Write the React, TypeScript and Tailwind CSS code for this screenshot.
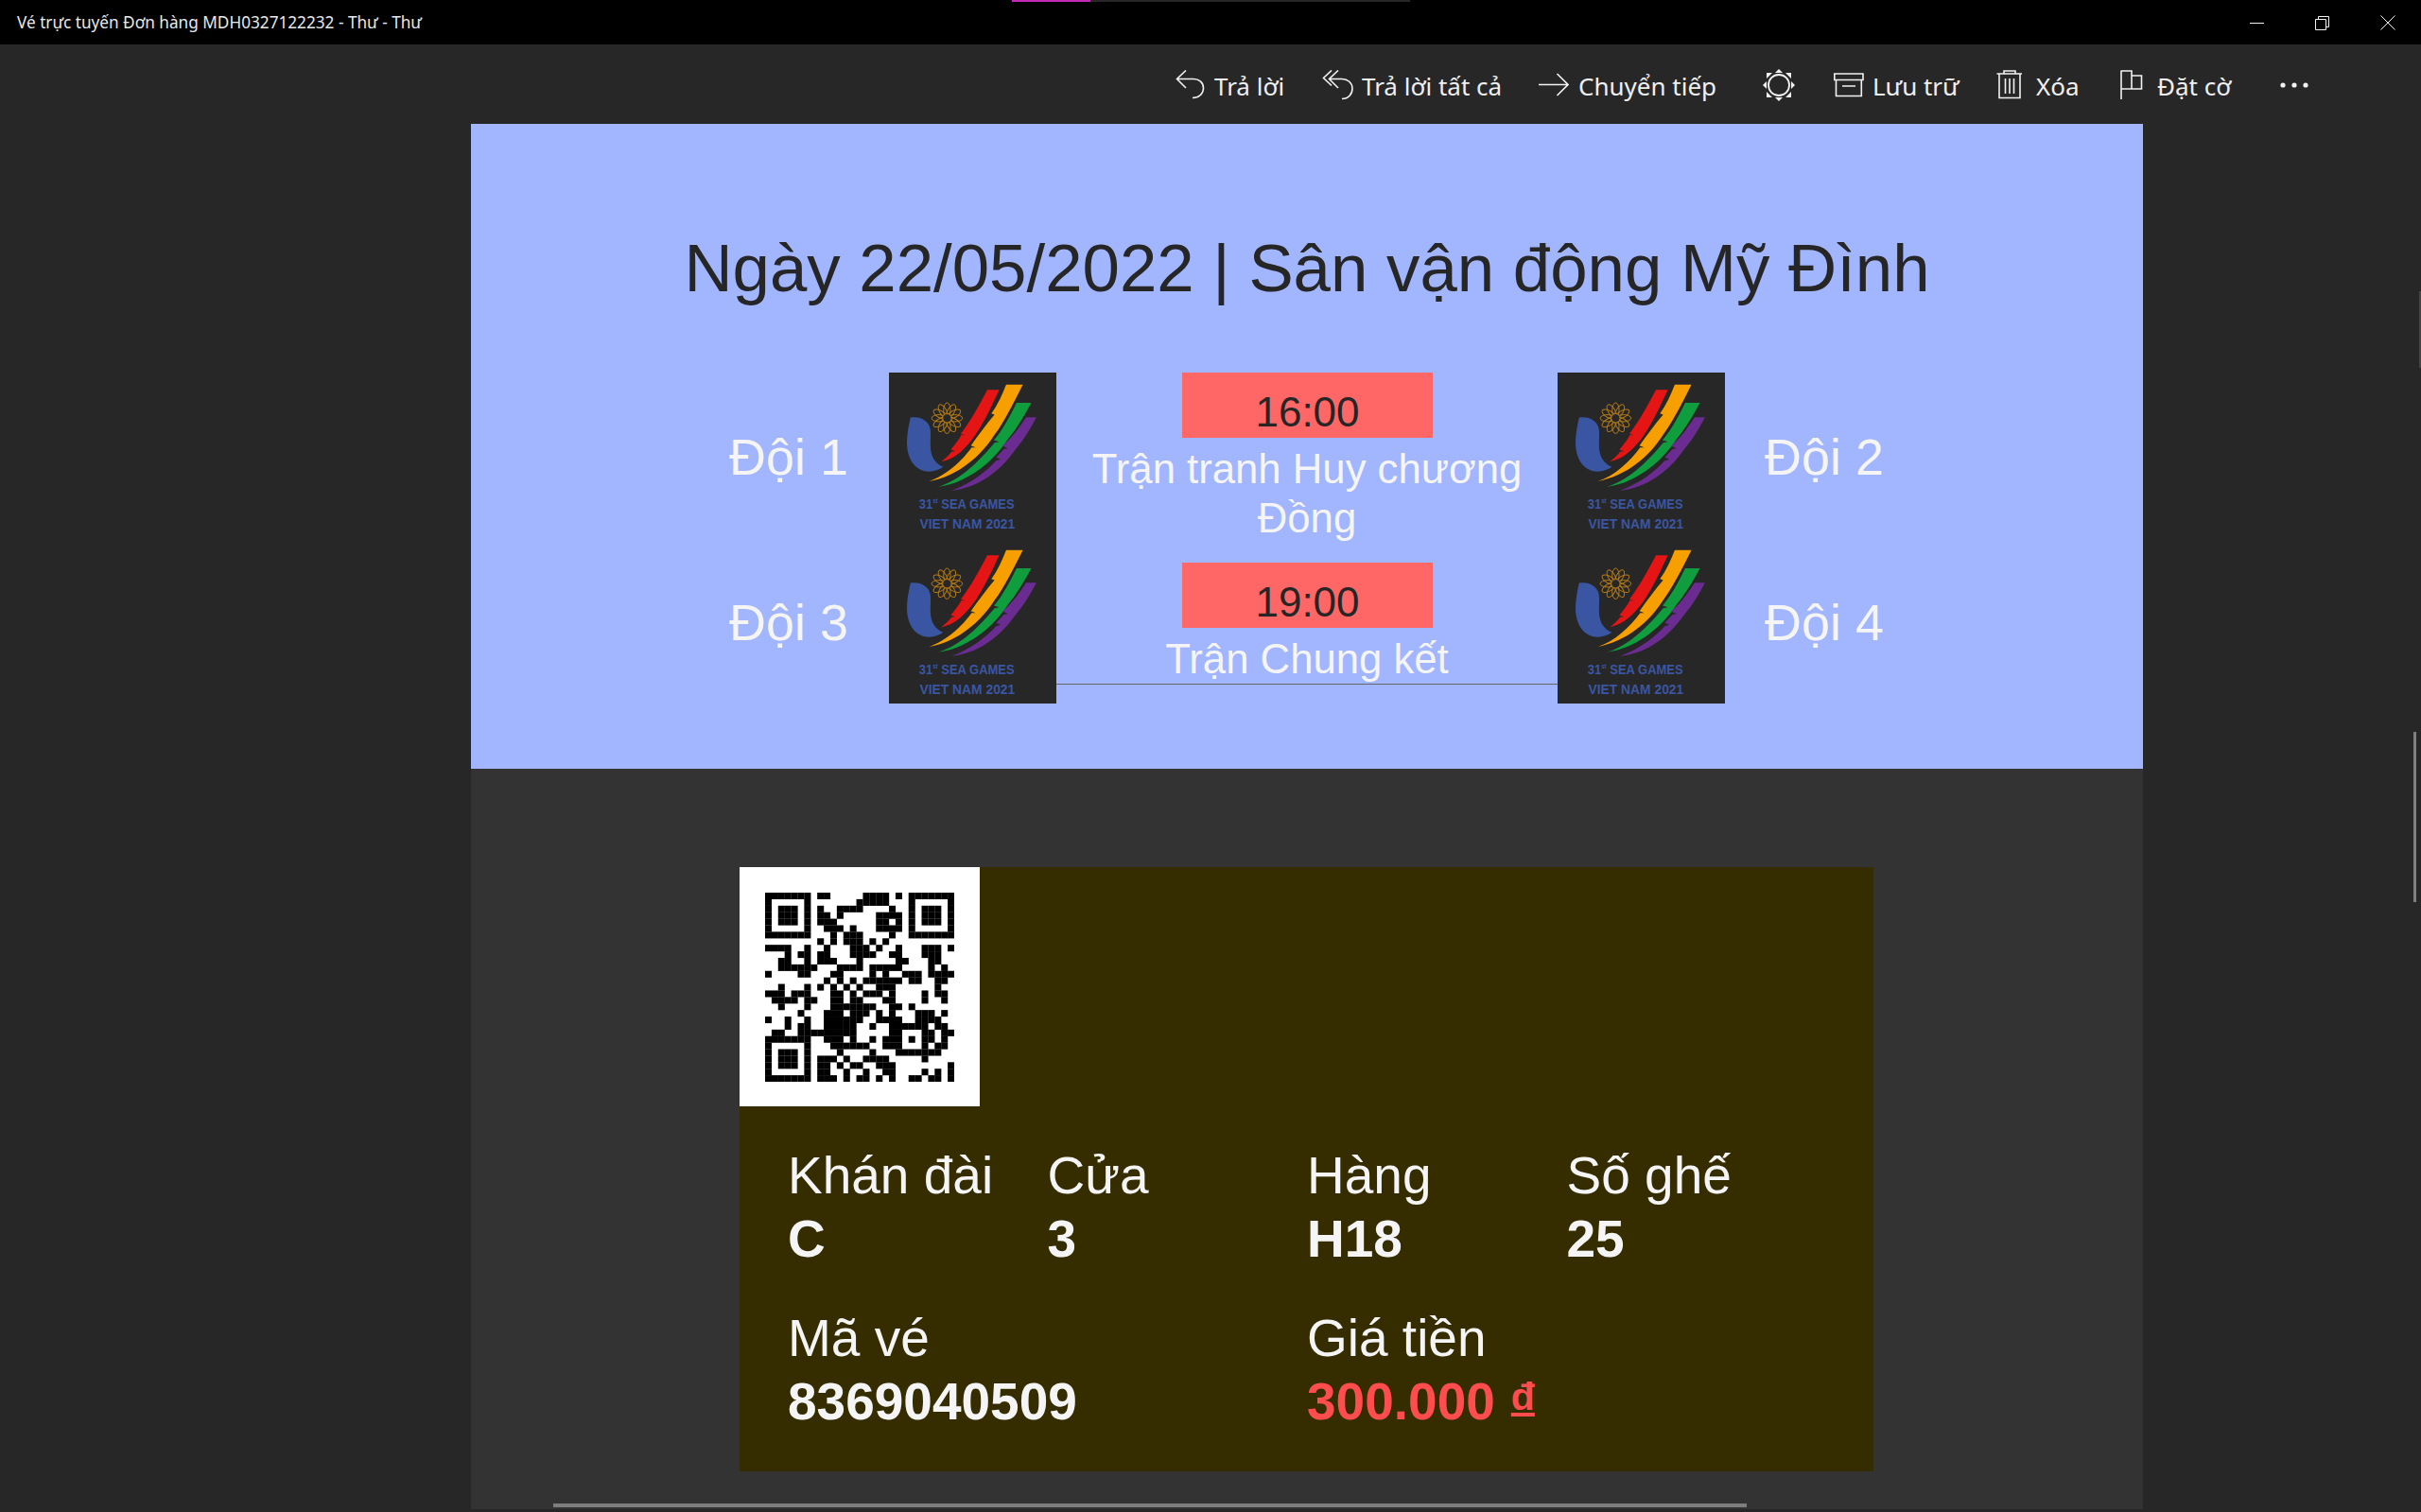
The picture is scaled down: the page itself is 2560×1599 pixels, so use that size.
const QR_ROWS = [
  "11111110110000011110101111111",
  "10000010000000111110001000001",
  "10111010100111100001001011101",
  "10111010110100000111101011101",
  "10111010111000000110101011101",
  "10000010011101000111101000001",
  "11111110001011100001001111111",
  "00000000101011101010000000000",
  "11110010010001110100100011101",
  "00010110110001111001100011100",
  "00110010111000100000110001100",
  "00111111000111101111100001010",
  "10000110001100001010011101111",
  "00000000010101011111101100110",
  "00100010101010100111000000100",
  "11101110001101011101000010110",
  "01111011001101100011000010010",
  "00100010001111111001101000000",
  "00000100011101110101000111010",
  "10010010011111100111100111100",
  "00010110011111001001111110110",
  "01100111111111000001100011011",
  "11111110011101001011101011010",
  "10000010001111110011100010110",
  "10111010000100001000111111100",
  "10111010111010011110000010000",
  "10111010110101100111000000001",
  "10000010110010010011000010101",
  "11111110111010110101001101101",
];

const QrCode = () => (
  <svg viewBox="0 0 29 29" className="w-[200px] h-[200px]">
    {QR_ROWS.map((row, y) =>
      row.split("").map((c, x) =>
        c === "1" ? <rect key={`${x}-${y}`} x={x} y={y} width="1.02" height="1.02" fill="#000" /> : null
      )
    )}
  </svg>
);

const PETALS = [0, 30, 60, 90, 120, 150, 180, 210, 240, 270, 300, 330];

const SeaGamesLogo = () => (
  <svg viewBox="60 42 531 526" className="w-[177px] h-[175px] block bg-[#272727]">
    <path d="M128 185 C160 180 186 195 191 222 C196 262 176 315 232 342 C205 362 160 365 135 330 C112 295 112 255 128 185 Z" fill="#3a56a3" />
    <g fill="none" stroke="#b47a16" strokeWidth="3">
      {PETALS.map((a) => (
        <ellipse key={a} cx="244" cy="162" rx="11" ry="24" transform={`rotate(${a} 244 187)`} />
      ))}
      <circle cx="244" cy="187" r="14" fill="#272727" />
    </g>
    <path d="M372 97 H410 C390 140 365 195 335 240 C300 290 265 318 226 325 C240 315 250 305 258 294 L270 292 L256 287 C270 270 280 258 290 240 L302 243 L288 236 C320 195 350 140 372 97 Z" fill="#e51515" />
    <path d="M432 80 H485 C455 140 425 200 395 240 C350 310 280 370 187 388 C240 370 290 325 322 280 L335 280 L320 274 C345 240 370 205 395 176 L385 172 C405 145 420 110 432 80 Z" fill="#f89f00" />
    <path d="M465 138 H512 C490 180 465 220 437 255 C385 335 300 395 216 405 C285 385 345 325 395 265 L410 262 L393 257 C420 225 445 180 465 138 Z" fill="#0f9d3e" />
    <path d="M495 184 H528 C505 230 480 265 455 295 C400 370 330 410 258 417 C320 395 370 355 400 322 L415 318 L400 312 L425 285 L438 283 L420 275 C450 250 475 215 495 184 Z" fill="#6a2c91" />
    <text x="155" y="475" fontFamily="'Liberation Sans', sans-serif" fontWeight="700" fontSize="46" fill="#3a56a3" textLength="303" lengthAdjust="spacingAndGlyphs">
      31<tspan fontSize="22" dy="-18">st</tspan><tspan dy="18"> SEA GAMES</tspan>
    </text>
    <text x="157" y="538" fontFamily="'Liberation Sans', sans-serif" fontWeight="700" fontSize="46" fill="#3a56a3" textLength="303" lengthAdjust="spacingAndGlyphs">
      VIET NAM 2021
    </text>
  </svg>
);

const iconStroke = { fill: "none", stroke: "#f2f2f2", strokeWidth: 1.6 };

const ReplyIcon = () => (
  <svg width="31" height="31" viewBox="0 0 31 31" {...iconStroke}>
    <path d="M11 0.5 L1.5 9.5 L11 19 M1.5 9.5 H19 C25 9.5 29.5 13.5 29.5 19 C29.5 25 25 29.5 18 29.5" />
  </svg>
);
const ReplyAllIcon = () => (
  <svg width="33" height="32" viewBox="0 0 33 32" {...iconStroke}>
    <path d="M10 0.5 L1.5 8.5 L10 16.5 M17 0.5 L7.5 9.5 L17 19 M7.5 9.5 H21 C27 9.5 32 13.5 32 19.5 C32 25.5 28 30.5 21 30.5" />
  </svg>
);
const ForwardIcon = () => (
  <svg width="32" height="26" viewBox="0 0 32 26" {...iconStroke}>
    <path d="M0 12.5 H31 M19.5 1 L31 12.5 L19.5 24" />
  </svg>
);
const SunIcon = () => (
  <svg width="34" height="34" viewBox="0 0 34 34">
    <circle cx="17" cy="17" r="11" fill="none" stroke="#f2f2f2" strokeWidth="1.8" />
    <path d="M17 0 L21 4 H13 Z M17 34 L21 30 H13 Z M0 17 L4 13 V21 Z M34 17 L30 13 V21 Z M4 4 H10 L4 10 Z M30 4 H24 L30 10 Z M4 30 H10 L4 24 Z M30 30 H24 L30 24 Z" fill="#f2f2f2" />
  </svg>
);
const ArchiveIcon = () => (
  <svg width="32" height="26" viewBox="0 0 32 26" {...iconStroke}>
    <path d="M0.8 1 H31 V7.5 H0.8 Z M2.5 7.5 V24.5 H29.3 V7.5 M9 14 H23" />
  </svg>
);
const TrashIcon = () => (
  <svg width="28" height="31" viewBox="0 0 28 31" {...iconStroke}>
    <path d="M0.5 4 H27 M8 4 V1 H20 V4 M3 4 V29.5 H25 V4 M9.5 9 V25 M14 9 V25 M18.5 9 V25" />
  </svg>
);
const FlagIcon = () => (
  <svg width="24" height="32" viewBox="0 0 24 32" {...iconStroke}>
    <path d="M1 0.5 V31 M1 1 H12 V20 M12 6 H22.5 V20 H1" />
  </svg>
);
const DotsIcon = () => (
  <svg width="32" height="6" viewBox="0 0 32 6" fill="#f2f2f2">
    <circle cx="3" cy="3" r="2.6" />
    <circle cx="15" cy="3" r="2.6" />
    <circle cx="27" cy="3" r="2.6" />
  </svg>
);

const Label = ({ children }: { children: string }) => (
  <span className="pt-[3px] text-[26px] text-[#efefef] font-['Noto_Sans',sans-serif] font-normal leading-none">{children}</span>
);

const Toolbar = () => (
  <div className="h-[84px] flex items-center pl-[1243px] pt-[1px]">
    <div className="w-[155px] flex items-center gap-[10px]"><ReplyIcon /><Label>Trả lời</Label></div>
    <div className="w-[229px] flex items-center gap-[9px]"><ReplyAllIcon /><Label>Trả lời tất cả</Label></div>
    <div className="w-[237px] flex items-center gap-[10px]"><ForwardIcon /><Label>Chuyển tiếp</Label></div>
    <div className="w-[75px] flex items-center"><SunIcon /></div>
    <div className="w-[172px] flex items-center gap-[9px]"><ArchiveIcon /><Label>Lưu trữ</Label></div>
    <div className="w-[131px] flex items-center gap-[14px]"><TrashIcon /><Label>Xóa</Label></div>
    <div className="w-[169px] flex items-center gap-[15px]"><FlagIcon /><Label>Đặt cờ</Label></div>
    <DotsIcon />
  </div>
);

const TitleBar = () => (
  <div className="relative h-[47px] bg-black flex items-center pl-[18px]">
    <span className="text-[17.2px] text-[#e8e8e8] font-['Noto_Sans',sans-serif]">Vé trực tuyến Đơn hàng MDH0327122232 - Thư - Thư</span>
    <div className="absolute top-0 left-[1070px] flex h-[2px]">
      <div className="w-[83px] bg-[#c42bb5]" />
      <div className="w-[338px] bg-[#272727]" />
    </div>
    <div className="absolute top-[16px] left-[2379px] flex items-center">
      <svg width="16" height="15" viewBox="0 0 16 15" fill="none" stroke="#f2f2f2">
        <path d="M0 7.5 H15" />
      </svg>
      <svg className="ml-[53px]" width="15" height="15" viewBox="0 0 15 15" fill="none" stroke="#f2f2f2">
        <path d="M3.5 3 V0.5 H14.5 V11.5 H12 M0.5 3.5 H11.5 V14.5 H0.5 Z" />
      </svg>
      <svg className="ml-[54px]" width="16" height="16" viewBox="0 0 16 16" fill="none" stroke="#f2f2f2">
        <path d="M0.5 0.5 L15.5 15.5 M15.5 0.5 L0.5 15.5" />
      </svg>
    </div>
  </div>
);

const TimeBox = ({ time }: { time: string }) => (
  <div className="w-[265px] h-[69px] bg-[#ff6666] text-center text-[44px] leading-[55px] pt-[14px] pl-[1px] text-[#262626]">{time}</div>
);

const Team = ({ name }: { name: string }) => (
  <div className="h-[175px] flex items-center pt-[4px] text-[54px] text-[#f5f5f5]">{name}</div>
);

const Matches = () => (
  <div className="h-[682px] bg-[#a2b5ff]">
    <h1 className="pt-[112px] h-[263px] text-center text-[70.8px] leading-[82px] text-[#262626]">
      Ngày 22/05/2022 | Sân vận động Mỹ Đình
    </h1>
    <div className="flex pl-[273px]">
      <div className="w-[169px]"><Team name="Đội 1" /><Team name="Đội 3" /></div>
      <div><SeaGamesLogo /><SeaGamesLogo /></div>
      <div className="w-[530px] text-[43.7px] leading-[52px] text-[#f5f5f5] text-center">
        <div className="h-[201px] flex flex-col items-center">
          <TimeBox time="16:00" />
          <div className="mt-[7px] px-[20px]">Trận tranh Huy chương Đồng</div>
        </div>
        <div className="h-[129px] flex flex-col items-center border-b border-[#666]">
          <TimeBox time="19:00" />
          <div className="mt-[7px]">Trận Chung kết</div>
        </div>
      </div>
      <div><SeaGamesLogo /><SeaGamesLogo /></div>
      <div className="pl-[42px]"><Team name="Đội 2" /><Team name="Đội 4" /></div>
    </div>
  </div>
);

const Field = ({ label, value, span }: { label: string; value: string; span?: boolean }) => (
  <div className={span ? "col-span-2" : ""}>
    <div className="text-[55px] leading-[66px] text-[#f5f5f5]">{label}</div>
    <div className="pt-[1px] text-[55px] leading-[66px] font-bold text-[#f5f5f5]">{value}</div>
  </div>
);

const Ticket = () => (
  <div className="ml-[284px] mt-[104px] w-[1199px] h-[639px] bg-[#352d00]">
    <div className="w-[254px] h-[253px] bg-white flex items-center justify-center">
      <QrCode />
    </div>
    <div className="pl-[51px] pt-[40px] grid grid-cols-[274.5px_274.5px_274.5px_274.5px] gap-y-[39px]">
      <Field label="Khán đài" value="C" />
      <Field label="Cửa" value="3" />
      <Field label="Hàng" value="H18" />
      <Field label="Số ghế" value="25" />
      <Field label="Mã vé" value="8369040509" span />
      <div className="col-span-2">
        <div className="text-[55px] leading-[66px] text-[#f5f5f5]">Giá tiền</div>
        <div className="pt-[1px] flex items-start text-[55px] leading-[66px] font-bold text-[#ff4d4d]">
          300.000
          <span className="ml-[17px] mt-[6px] text-[41px] leading-[44px] underline">đ</span>
        </div>
      </div>
    </div>
  </div>
);

export default function App() {
  return (
    <div className="relative w-[2560px] h-[1599px] overflow-hidden bg-[#272727] font-['Liberation_Sans',Arial,sans-serif]">
      <TitleBar />
      <Toolbar />
      <div className="ml-[498px] w-[1768px] h-[1465px] bg-[#333333] overflow-hidden">
        <Matches />
        <Ticket />
      </div>
      {/* scrollbars */}
      <div className="absolute left-[585px] top-[1590px] w-[1262px] h-[4px] bg-[#7e7e7e]" />
      <div className="absolute left-[2552px] top-[774px] w-[3px] h-[180px] bg-[#808080]" />
      <div className="absolute left-[2558px] top-[308px] w-[2px] h-[81px] bg-[#444]" />
    </div>
  );
}
